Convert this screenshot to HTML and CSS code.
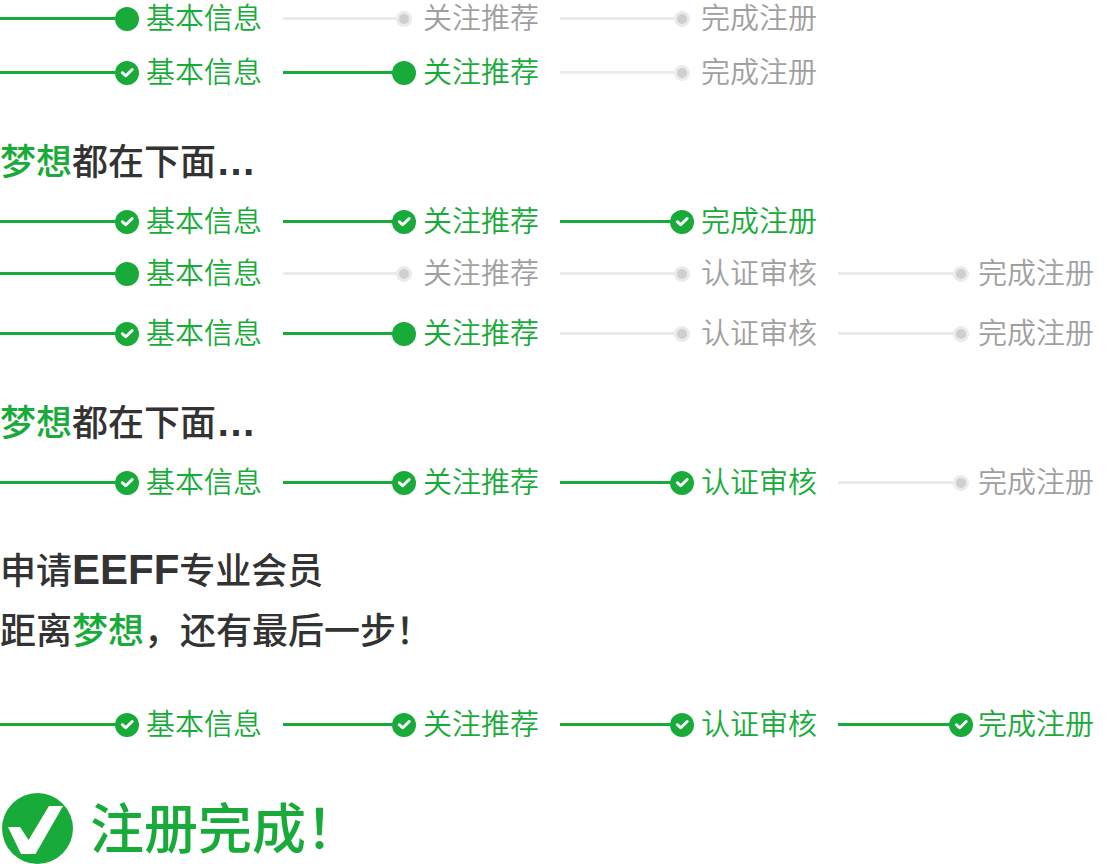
FILE: index.html
```html
<!DOCTYPE html>
<html lang="zh-CN">
<head>
<meta charset="utf-8">
<meta name="viewport" content="width=device-width, initial-scale=1">
<title>注册完成</title>
<link rel="stylesheet" href="styles.css">
</head>
<body>
<svg class="defs" aria-hidden="true">
  <symbol id="check" viewBox="0 0 24 24"><path d="M7.3 11.700 10.800 14.800 17.200 8.500" fill="none" stroke="#fff" stroke-width="2.9" stroke-linecap="round" stroke-linejoin="round"/></symbol>
</svg>
<main class="page">
  <ol class="steps">
    <li class="step current"><span class="marker"></span><span class="label">基本信息</span></li>
    <li class="step"><span class="marker"></span><span class="label">关注推荐</span></li>
    <li class="step"><span class="marker"></span><span class="label">完成注册</span></li>
  </ol>
  <ol class="steps spaced">
    <li class="step done"><svg class="marker"><use href="#check"/></svg><span class="label">基本信息</span></li>
    <li class="step current"><span class="marker"></span><span class="label">关注推荐</span></li>
    <li class="step"><span class="marker"></span><span class="label">完成注册</span></li>
  </ol>

  <h2 class="title"><span class="accent">梦想</span>都在下面<span class="dots">…</span></h2>
  <ol class="steps after-title">
    <li class="step done"><svg class="marker"><use href="#check"/></svg><span class="label">基本信息</span></li>
    <li class="step done"><svg class="marker"><use href="#check"/></svg><span class="label">关注推荐</span></li>
    <li class="step done"><svg class="marker"><use href="#check"/></svg><span class="label">完成注册</span></li>
  </ol>
  <ol class="steps close">
    <li class="step current"><span class="marker"></span><span class="label">基本信息</span></li>
    <li class="step"><span class="marker"></span><span class="label">关注推荐</span></li>
    <li class="step"><span class="marker"></span><span class="label">认证审核</span></li>
    <li class="step"><span class="marker"></span><span class="label">完成注册</span></li>
  </ol>
  <ol class="steps loose">
    <li class="step done"><svg class="marker"><use href="#check"/></svg><span class="label">基本信息</span></li>
    <li class="step current"><span class="marker"></span><span class="label">关注推荐</span></li>
    <li class="step"><span class="marker"></span><span class="label">认证审核</span></li>
    <li class="step"><span class="marker"></span><span class="label">完成注册</span></li>
  </ol>

  <h2 class="title"><span class="accent">梦想</span>都在下面<span class="dots">…</span></h2>
  <ol class="steps after-title">
    <li class="step done"><svg class="marker"><use href="#check"/></svg><span class="label">基本信息</span></li>
    <li class="step done"><svg class="marker"><use href="#check"/></svg><span class="label">关注推荐</span></li>
    <li class="step done"><svg class="marker"><use href="#check"/></svg><span class="label">认证审核</span></li>
    <li class="step"><span class="marker"></span><span class="label">完成注册</span></li>
  </ol>

  <h1 class="title apply">申请<span class="latin">EEFF</span>专业会员<br>距离<span class="accent">梦想</span>，还有最后一步！</h1>
  <ol class="steps final">
    <li class="step done"><svg class="marker"><use href="#check"/></svg><span class="label">基本信息</span></li>
    <li class="step done"><svg class="marker"><use href="#check"/></svg><span class="label">关注推荐</span></li>
    <li class="step done"><svg class="marker"><use href="#check"/></svg><span class="label">认证审核</span></li>
    <li class="step done"><svg class="marker"><use href="#check"/></svg><span class="label">完成注册</span></li>
  </ol>

  <div class="success">
    <svg class="badge" viewBox="0 0 71 71" aria-hidden="true"><circle cx="35.5" cy="35.5" r="35.5" fill="#19ab3a"/><path d="M6 34H18L26.500 47 47 13H61L33.500 61H19Z" fill="#fff"/></svg>
    <p class="message">注册完成！</p>
  </div>
</main>
</body>
</html>
```
FILE: styles.css
```css
:root {
  --green: #19ab3a;
  --line: #ebebeb;
  --muted: #9f9f9f;
}

* {
  box-sizing: border-box;
}

body {
  margin: 0;
  background: #fff;
  color: #333;
  font-family: "Noto Sans CJK SC", sans-serif;
}

.defs {
  display: none;
}

.page {
  display: flex;
  flex-direction: column;
}

.steps {
  display: grid;
  grid-template-columns: 283fr 277fr 278fr 282fr;
  margin: 0;
  padding: 0;
  list-style: none;
}

.step {
  display: flex;
  align-items: center;
  height: 37px;
  padding-right: 21px;
  color: var(--muted);
}

.step:nth-child(4) {
  padding-right: 26px;
}

.step::before {
  content: "";
  flex: 1;
  height: 3px;
  background: var(--line);
}

.marker {
  flex: none;
  width: 16px;
  height: 16px;
  margin-right: 11px;
  border: 3px solid var(--line);
  border-radius: 50%;
  background: #cfcfcf;
}

.step:nth-child(4) .marker {
  margin-right: 9px;
}

.done,
.current {
  color: var(--green);
}

.done::before,
.current::before {
  background: var(--green);
}

.done .marker,
.current .marker {
  width: 24px;
  height: 24px;
  margin-right: 7px;
  border: 0;
  background: var(--green);
}

.step.done:nth-child(4) .marker {
  margin-right: 5px;
}

.label {
  padding-bottom: 4px;
  font-size: 29px;
  font-weight: 350;
  line-height: 33px;
  white-space: nowrap;
}

.spaced {
  margin-top: 17px;
}

.close {
  margin-top: 15px;
}

.loose {
  margin-top: 23px;
}

.after-title {
  margin-top: 14px;
}

.final {
  margin-top: 48px;
}

.title {
  margin: 38px 0 0;
  font-size: 36px;
  font-weight: 500;
  line-height: 60px;
}

.apply {
  margin-top: 37px;
}

.accent {
  color: var(--green);
}

.dots {
  font-family: "Liberation Sans", sans-serif;
  font-size: 40px;
  font-weight: 700;
  line-height: 36px;
}

.latin {
  font-family: "Liberation Sans", sans-serif;
  font-size: 42px;
  font-weight: 700;
  line-height: 36px;
}

.success {
  display: flex;
  align-items: center;
  gap: 17px;
  margin-top: 50px;
  padding-left: 2px;
}

.badge {
  flex: none;
  width: 71px;
  height: 71px;
}

.message {
  margin: 0;
  padding-bottom: 6px;
  color: var(--green);
  font-size: 54px;
  font-weight: 500;
  line-height: 64px;
}
```
